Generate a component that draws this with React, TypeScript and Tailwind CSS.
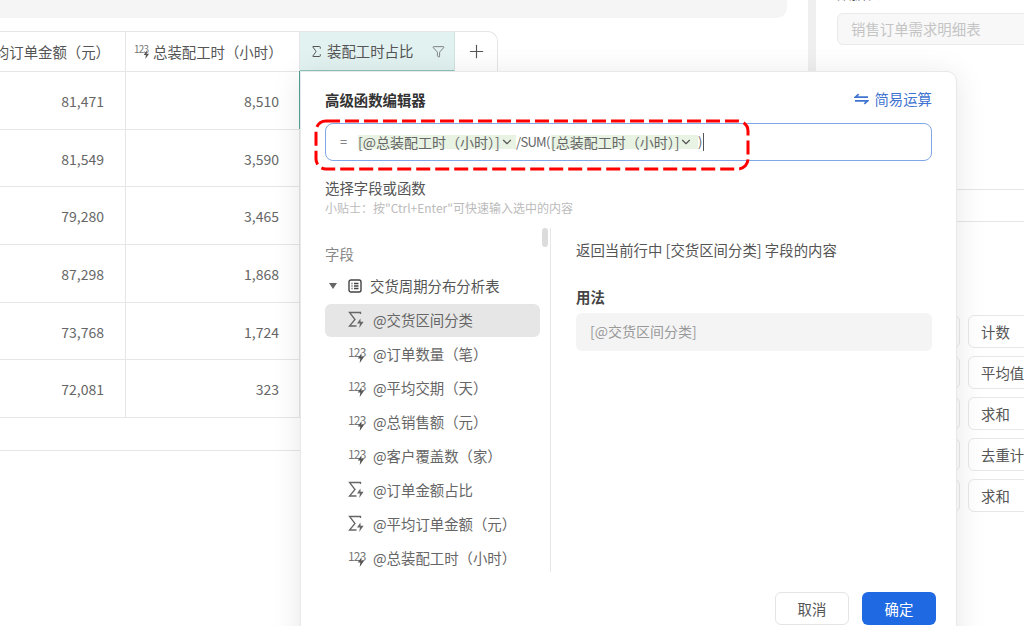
import { ChevronDown, Filter, Plus, Sigma } from "lucide-react";

const rows = [
  ["81,471", "8,510"],
  ["81,549", "3,590"],
  ["79,280", "3,465"],
  ["87,298", "1,868"],
  ["73,768", "1,724"],
  ["72,081", "323"],
];

const fields = [
  { kind: "sum", name: "@交货区间分类" },
  { kind: "num", name: "@订单数量（笔）" },
  { kind: "num", name: "@平均交期（天）" },
  { kind: "num", name: "@总销售额（元）" },
  { kind: "num", name: "@客户覆盖数（家）" },
  { kind: "sum", name: "@订单金额占比" },
  { kind: "sum", name: "@平均订单金额（元）" },
  { kind: "num", name: "@总装配工时（小时）" },
];

const pills = ["计数", "平均值", "求和", "去重计数", "求和"];

function Bolt({ className }: { className: string }) {
  return (
    <svg viewBox="0 0 8 10" className={className} fill="currentColor">
      <path d="M4.6 0 .8 5.6h2.5L2.7 10l4.2-6H4.2z" />
    </svg>
  );
}

function NumIcon({ small }: { small?: boolean }) {
  return (
    <span className={`relative block shrink-0 text-[#777] ${small ? "w-[16px] h-[15px]" : "w-[17px] h-[18px]"}`}>
      <span className={`block leading-none tracking-[-0.8px] ${small ? "text-[10px]" : "text-[12px] mt-[1px]"}`}>123</span>
      <Bolt className={`absolute right-0 bottom-0 text-[#555] ${small ? "w-[7px] h-[9px]" : "w-[8px] h-[10px]"}`} />
    </span>
  );
}

function SumIcon() {
  return (
    <svg viewBox="0 0 17 18" className="w-[17px] h-[18px] shrink-0 text-[#666]" fill="none" stroke="currentColor" strokeWidth="1.3">
      <path d="M12.5 3V1.5H1.5L7 8.5 1.5 15h7" />
      <path d="M12.4 7.5 9 12.6h3l-.8 4.4 4.4-6.2h-3z" fill="currentColor" stroke="none" />
    </svg>
  );
}

function TableIcon() {
  return (
    <svg viewBox="0 0 14 14" className="w-[14px] h-[14px] shrink-0" fill="none" stroke="#444" strokeWidth="1.4">
      <rect x="1" y="1" width="12" height="12" rx="2" />
      <path d="M3.5 4.5h1M6 4.5h4.5M3.5 7h1M6 7h4.5M3.5 9.5h1M6 9.5h4.5" />
    </svg>
  );
}

function SwapIcon() {
  return (
    <svg viewBox="0 0 16 12" className="w-[15px] h-[12px]" fill="none" stroke="#3f74d0" strokeWidth="1.8">
      <path d="M15 4H1.5L5 .8M1 8h13.5L11 11.2" />
    </svg>
  );
}

function Chip({ text, className }: { text: string; className: string }) {
  return (
    <span className={`flex items-center h-[14px] bg-[#e8f3e3] text-[14px] text-[#666] whitespace-nowrap ${className}`}>
      {text}
      <ChevronDown size={14} strokeWidth={2} className="text-[#555] shrink-0" />
    </span>
  );
}

function Modal() {
  return (
    <div className="absolute left-[300px] top-[71px] w-[657px] h-[600px] bg-white border border-[#e8e8e8] rounded-tr-[10px] shadow-[0_4px_30px_rgba(0,0,0,0.10)] text-[#555]">
      <div className="flex items-center justify-between pl-[24px] pr-[24px] pt-[14px] h-[41px]">
        <span className="text-[14.4px] font-bold text-[#333]">高级函数编辑器</span>
        <span className="flex items-center gap-[5px] text-[14.4px] text-[#3f74d0] -mt-[1px]">
          <SwapIcon />
          简易运算
        </span>
      </div>
      <div className="ml-[24px] mt-[10px] w-[607px] h-[38px] flex items-center pl-[14px] border border-[#7fa6e6] rounded-[8px] text-[13px] text-[#666]">
        <span className="w-[18px]">=</span>
        <Chip text="[@总装配工时（小时）]" className="w-[158px]" />
        <span className="w-[35px] whitespace-nowrap tracking-[-0.7px]">/SUM(</span>
        <Chip text="[总装配工时（小时）]" className="w-[147px]" />
        <span className="border-r border-[#555] pr-[1px] h-[18px] leading-[18px]">)</span>
      </div>
      <div className="ml-[24px] mt-[17px] text-[14.4px] leading-[20px] text-[#555]">选择字段或函数</div>
      <div className="ml-[24px] mt-[1px] text-[12px] leading-[18px] text-[#bbb]">小贴士：按"Ctrl+Enter"可快速输入选中的内容</div>
      <div className="flex mt-[11px] h-[344px]">
        <div className="relative w-[250px] h-full border-r border-[#e6e6e6] overflow-hidden pl-[24px] pr-[10px] shrink-0">
          <div className="absolute right-[2px] top-0 w-[6px] h-[19px] rounded-full bg-[#dcdcdc]" />
          <div className="pt-[16px] text-[14.4px] leading-[20px] text-[#888]">字段</div>
          <div className="flex items-center h-[34px] mt-[5px] text-[14.4px] text-[#555]">
            <span className="w-0 h-0 ml-[4px] border-l-[4px] border-r-[4px] border-t-[6px] border-l-transparent border-r-transparent border-t-[#666]" />
            <span className="ml-[11px]"><TableIcon /></span>
            <span className="ml-[8px]">交货周期分布分析表</span>
          </div>
          {fields.map((f, i) => (
            <div
              key={i}
              className={`flex items-center h-[33px] mt-[1px] pb-[2px] pl-[23px] gap-[8px] text-[14.4px] rounded-[6px] ${i === 0 ? "bg-[#e6e6e6]" : ""}`}
            >
              {f.kind === "sum" ? <SumIcon /> : <NumIcon />}
              <span className="whitespace-nowrap text-[#666]">{f.name}</span>
            </div>
          ))}
        </div>
        <div className="flex-1 pl-[25px] pr-[24px] pt-[12px] text-[14.4px]">
          <div className="leading-[20px] text-[#555]">返回当前行中 [交货区间分类] 字段的内容</div>
          <div className="mt-[27px] leading-[20px] font-bold text-[#444]">用法</div>
          <div className="mt-[6px] h-[38px] flex items-center pl-[14px] pb-[2px] rounded-[6px] bg-[#f4f4f4] text-[14px] text-[#999]">[@交货区间分类]</div>
        </div>
      </div>
      <div className="flex justify-end gap-[13px] mt-[20px] pr-[20px]">
        <button className="w-[74px] h-[33px] rounded-[6px] border border-[#e4e4e4] bg-white text-[14.4px] text-[#555]">取消</button>
        <button className="w-[74px] h-[33px] rounded-[6px] bg-[#1f6ae3] text-[14.4px] text-white">确定</button>
      </div>
    </div>
  );
}

export default function App() {
  return (
    <div
      className="relative flex w-[1024px] h-[626px] overflow-hidden bg-white"
      style={{ fontFamily: '"Noto Sans CJK SC", "Noto Sans", sans-serif' }}
    >
      <div className="w-[808px] shrink-0">
        <div className="w-[787px] h-[18px] bg-[#f5f5f5] rounded-br-[10px]" />
        <div className="mt-[13px] w-[498px] border-t border-r border-[#e6e6e6] rounded-tr-[10px]">
          <div className="flex h-[40px] border-b border-[#e6e6e6] text-[14.4px] text-[#555]">
            <div className="w-[126px] shrink-0 flex items-center justify-end overflow-hidden pr-[15px] border-r border-[#e6e6e6] whitespace-nowrap">
              平均订单金额（元）
            </div>
            <div className="w-[174px] shrink-0 flex items-center pl-[8px] gap-[3px] border-r border-[#e6e6e6] whitespace-nowrap">
              <NumIcon small />
              总装配工时（小时）
            </div>
            <div className="w-[155px] shrink-0 flex items-center pl-[10px] bg-[#e2f2f0] border-r border-[#cfe3df] border-b-2 border-b-[#8cc5bb] h-[40px] whitespace-nowrap">
              <Sigma size={15} strokeWidth={1.6} className="text-[#555] -ml-[1px]" />
              <span className="ml-[3px] flex-1">装配工时占比</span>
              <Filter size={13} strokeWidth={1.3} className="mr-[9px] text-[#555]" />
            </div>
            <div className="flex-1 flex items-center justify-center">
              <Plus size={21} strokeWidth={1.3} className="text-[#555]" />
            </div>
          </div>
          {rows.map((r, i) => (
            <div key={i} className="flex h-[57.7px] w-[808px] border-b border-[#e6e6e6] text-[14px] text-[#666]">
              <div className="w-[126px] shrink-0 flex items-center justify-end pt-[2px] pr-[21px] border-r border-[#e6e6e6]">{r[0]}</div>
              <div className="w-[174px] shrink-0 flex items-center justify-end pt-[2px] pr-[20px] border-r border-[#e6e6e6]">{r[1]}</div>
            </div>
          ))}
        </div>
        <div className="mt-[32px] w-[808px] border-t border-[#e6e6e6]" />
      </div>

      <div className="w-[8px] shrink-0 bg-[#efefef]" />

      <div className="flex-1 overflow-hidden pl-[21px]">
        <div className="-mt-[17px] h-[30px] text-[14.4px] leading-[20px] text-[#555]">数据表</div>
        <div className="w-[300px] h-[32px] flex items-center pl-[13px] rounded-[6px] border border-[#eaeaea] bg-[#f8f8f8] text-[14.4px] text-[#c4c4c4]">
          销售订单需求明细表
        </div>
        <div className="-ml-[21px] mt-[144px] h-[33px] w-[300px] border-y border-[#e6e6e6]" />
        <div className="mt-[93px] grid grid-cols-[123px_123px] gap-x-[8px] gap-y-[8px] w-[254px]">
          {pills.map((p, i) => (
            <div key={i} className="contents">
              <div className="h-[33px] rounded-[6px] border border-[#e8e8e8]" />
              <div className="h-[33px] flex items-center pl-[12px] rounded-[6px] border border-[#e8e8e8] text-[14.4px] text-[#555] whitespace-nowrap">
                {p}
              </div>
            </div>
          ))}
        </div>
      </div>

      <Modal />
      <div className="absolute left-[299px] top-[71px] w-[1px] h-[58px] bg-[#4f9d92]" />

      <svg className="absolute left-[314px] top-[119px] w-[436px] h-[52px] pointer-events-none" viewBox="0 0 436 52" fill="none">
        <rect x="2" y="2" width="432" height="48" rx="10" stroke="#ff0000" strokeWidth="3" strokeDasharray="14 5" />
      </svg>
    </div>
  );
}
